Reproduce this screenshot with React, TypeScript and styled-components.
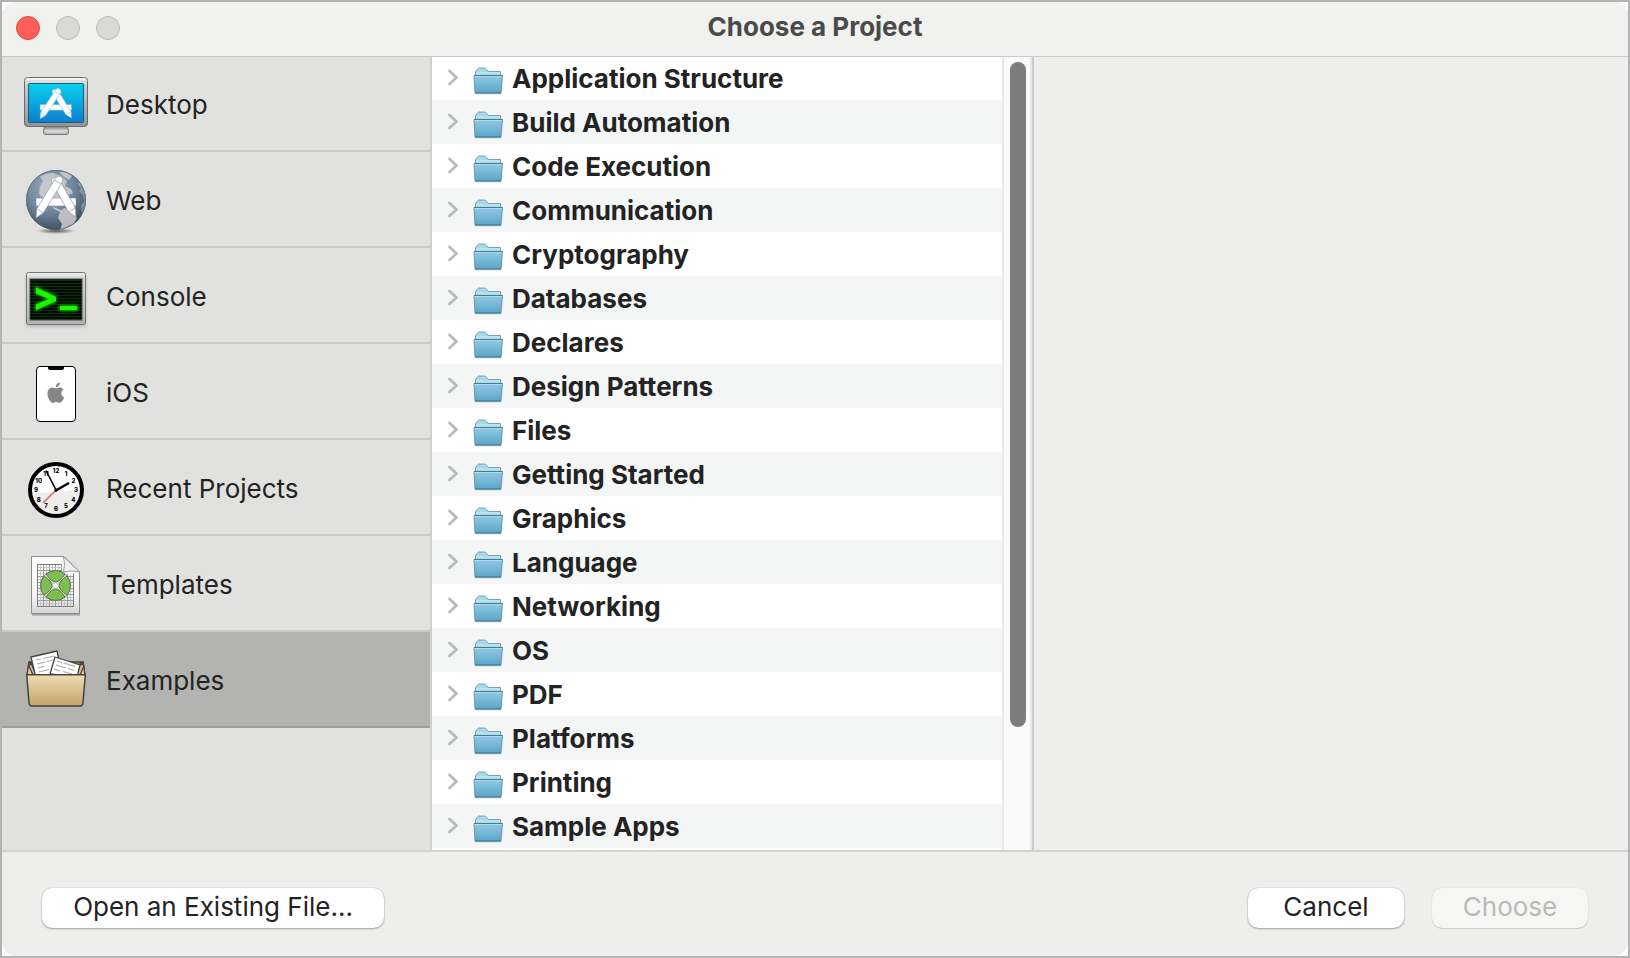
import React, { useState } from "react";
import styled, { createGlobalStyle } from "styled-components";

const GlobalStyle = createGlobalStyle`
  *, *::before, *::after { box-sizing: border-box; }
  body { margin: 0; }
  button { font: inherit; color: inherit; }
`;

const Frame = styled.div`
  height: 100vh;
  border: 2px solid #b3b3b3;
  background: #ffffff;
  font-family: Inter, "Liberation Sans", sans-serif;
  font-size: 26px;
  line-height: 32px;
  color: #232323;
`;

const Window = styled.div`
  display: flex;
  flex-direction: column;
  height: 100%;
  border-radius: 14px;
  overflow: hidden;
  background: #eeeeec;
`;

const TitleBar = styled.header`
  position: relative;
  z-index: 1;
  display: grid;
  grid-template-columns: 1fr auto 1fr;
  align-items: center;
  flex: none;
  height: 54px;
  padding: 0 14px 2px;
  background: #f1f1ef;
  box-shadow: 0 1px 0 #c9c9c8;
`;

const Lights = styled.div`
  display: flex;
  gap: 16px;
`;

const Light = styled.button<{ $fill: string; $edge: string }>`
  width: 24px;
  height: 24px;
  padding: 0;
  border: 1px solid ${(p) => p.$edge};
  border-radius: 50%;
  background: ${(p) => p.$fill};
`;

const Title = styled.h1`
  margin: 0;
  padding-bottom: 2px;
  font-size: 26px;
  line-height: 32px;
  font-weight: 700;
  color: #4a4a4a;
`;

const Body = styled.main`
  display: grid;
  grid-template-columns: 430px minmax(0, 602px) minmax(0, 1fr);
  flex: 1;
  min-height: 0;
`;

const Sidebar = styled.nav`
  min-height: 0;
  overflow: hidden;
  border-right: 2px solid #cfcfcd;
  background: #e1e1df;
`;

const Category = styled.button<{ $active: boolean }>`
  display: flex;
  align-items: center;
  gap: 18px;
  width: 100%;
  height: 96px;
  padding: 2px 22px 0;
  border: 0;
  border-bottom: 2px solid ${(p) => (p.$active ? "#9f9f9d" : "#c9c9c7")};
  background: ${(p) => (p.$active ? "#b3b3b1" : "transparent")};
  text-align: left;

  svg { flex: none; }
`;

const CategoryName = styled.span`
  padding-top: 2px;
`;

const ListPane = styled.section`
  display: flex;
  min-height: 0;
  border-right: 2px solid #cdcdcb;
  background: #ffffff;
`;

const Tree = styled.ul`
  flex: 1;
  min-width: 0;
  margin: 0;
  padding: 0;
  list-style: none;
  overflow-y: auto;
  scrollbar-width: none;
`;

const TreeItem = styled.li`
  &:nth-child(even) { background: #f4f5f5; }
`;

const TreeRow = styled.button`
  display: flex;
  align-items: center;
  width: 100%;
  height: 44px;
  padding: 0 16px;
  border: 0;
  background: transparent;
  font-weight: 700;
  text-align: left;
  white-space: nowrap;

  svg { flex: none; }
`;

const FolderSlot = styled.span`
  display: flex;
  padding: 6px 9px 0 15px;
`;

const FolderName = styled.span`
  padding-top: 2px;
`;

const Track = styled.div`
  flex: none;
  width: 30px;
  padding: 6px;
  border: solid #e8e8e8;
  border-width: 0 2px;
  background: #fafafa;
`;

const Thumb = styled.div`
  width: 16px;
  height: 85%;
  border-radius: 8px;
  background: #7d7d7d;
`;

const Details = styled.section`
  background: #eeeeec;
`;

const Footer = styled.footer`
  display: flex;
  gap: 28px;
  flex: none;
  height: 106px;
  padding: 36px 40px 0;
  border-top: 2px solid #d3d3d1;
`;

const PushButton = styled.button<{ $width: number }>`
  width: ${(p) => p.$width}px;
  height: 40px;
  padding: 0 0 2px;
  border: 0;
  border-radius: 10px;
  background: #ffffff;
  box-shadow: 0 0 1px rgba(0, 0, 0, 0.35), 0 1px 2px rgba(0, 0, 0, 0.3);
  white-space: nowrap;

  &:disabled {
    background: #f6f6f5;
    color: #b9b9b8;
    box-shadow: 0 0 1px rgba(0, 0, 0, 0.2), 0 1px 1px rgba(0, 0, 0, 0.12);
  }
`;

const Spacer = styled.div`
  flex: 1;
`;

const Icon = ({ children }: { children: React.ReactNode }) => (
  <svg width="64" height="64" viewBox="0 0 64 64" fill="none" overflow="visible" aria-hidden="true">
    {children}
  </svg>
);

/* A pencil, a brush and a ruler crossed into the letter shape of the app badge. */
const Tools = ({ edge }: { edge: string }) => (
  <g stroke={edge} strokeWidth="0.6" strokeLinejoin="round" fill="#fff">
    <path d="M12 30H52V38H12Z" />
    <path d="M27.500 14Q26.500 10 29 10Q32 8 34.500 10L51.500 40L52 49L44.500 44Z" />
    <path d="M44.500 44L51.500 40" />
    <path d="M31.600 10Q34 6.500 37.500 9Q39.500 11 38.400 14L19.400 45L12 50L12.600 41Z" />
    <path d="M12.600 41L19.400 45M30.500 12L37 16" />
  </g>
);

const DesktopIcon = () => (
  <Icon>
    <defs>
      <linearGradient id="bezel" x1="0" y1="0" x2="0" y2="1">
        <stop offset="0" stopColor="#efefef" />
        <stop offset="0.15" stopColor="#cfcfcf" />
        <stop offset="1" stopColor="#939393" />
      </linearGradient>
      <linearGradient id="screen" x1="0" y1="0" x2="0" y2="1">
        <stop offset="0" stopColor="#0ad0ee" />
        <stop offset="1" stopColor="#0a7fd0" />
      </linearGradient>
      <linearGradient id="stand" x1="0" y1="0" x2="0" y2="1">
        <stop offset="0" stopColor="#777" />
        <stop offset="0.6" stopColor="#ddd" />
        <stop offset="1" stopColor="#aaa" />
      </linearGradient>
    </defs>
    <path d="M20.500 54H43.500L44.500 60Q44.500 62.500 42 62.500H22Q19.500 62.500 19.500 60Z" fill="url(#stand)" stroke="#777" />
    <rect x="0.500" y="5.500" width="63" height="49" rx="3" fill="url(#bezel)" stroke="#6d6d6d" />
    <path d="M3 7H61" stroke="#fff" />
    <rect x="4.500" y="11.500" width="55" height="39" rx="1" fill="url(#screen)" stroke="#17617f" />
    <g transform="translate(6.500 10.500) scale(0.790 0.730)">
      <Tools edge="#5b9fc4" />
    </g>
  </Icon>
);

const WebIcon = () => (
  <Icon>
    <defs>
      <radialGradient id="ocean" cx="0.4" cy="0.3" r="0.75">
        <stop offset="0" stopColor="#9fb2c6" />
        <stop offset="0.55" stopColor="#6f8499" />
        <stop offset="1" stopColor="#38495b" />
      </radialGradient>
      <radialGradient id="ground">
        <stop offset="0" stopColor="#333" stopOpacity="0.8" />
        <stop offset="1" stopColor="#333" stopOpacity="0" />
      </radialGradient>
      <clipPath id="globe"><circle cx="32" cy="32" r="30" /></clipPath>
    </defs>
    <ellipse cx="32" cy="63" rx="20" ry="3" fill="url(#ground)" />
    <circle cx="32" cy="32" r="30" fill="url(#ocean)" />
    <g clipPath="url(#globe)" fill="#cdcecf" opacity="0.85">
      <path d="M16 9Q21 5 29 5L37 8L43 13L41 18L47 21L49 25L42 28L38 34L33 35L33 39L28 37L21 32L15 26L16 19L19 13Z" />
      <path d="M35 4Q43 3 48 8L45 12L40 9Z" />
      <path d="M28 38L34 41L40 43L36 44L30 41Z" />
      <path d="M36 44L40 40L46 42L50 47L53 50L49 57L43 60L38 63L36 62L38 56L34 50Z" />
      <path d="M53 15L57 20L55 23L59 27L60 33L57 38L58 46L66 48V12Z" opacity="0.5" />
    </g>
    <circle cx="32" cy="32" r="29.500" stroke="#4f6072" opacity="0.7" />
    <Tools edge="#7b8794" />
  </Icon>
);

const ConsoleIcon = () => (
  <Icon>
    <defs>
      <linearGradient id="case" x1="0" y1="0" x2="0" y2="1">
        <stop offset="0" stopColor="#f1f1f1" />
        <stop offset="0.12" stopColor="#d1d1d1" />
        <stop offset="1" stopColor="#b3b3b3" />
      </linearGradient>
      <pattern id="scan" width="4" height="3" patternUnits="userSpaceOnUse">
        <path d="M0 1.500H4" stroke="#0b3a0d" strokeWidth="0.8" />
      </pattern>
      <filter id="glow" x="-30%" y="-50%" width="160%" height="200%">
        <feGaussianBlur stdDeviation="1.800" />
      </filter>
    </defs>
    <rect x="2" y="10" width="60" height="53" rx="3" fill="#777" opacity="0.35" filter="url(#glow)" />
    <rect x="2.500" y="8.500" width="59" height="52" rx="2" fill="url(#case)" stroke="#777" />
    <rect x="6" y="15" width="52" height="41" fill="#020a02" />
    <rect x="6" y="15" width="52" height="41" fill="url(#scan)" stroke="#444" />
    <g filter="url(#glow)" fill="#12c800">
      <path d="M11 22L32 32V38L11 47V40L24 35L11 30Z" />
      <path d="M35 41H54V47H35Z" />
    </g>
    <path d="M12 23.500L32 33V37L12 46V40.500L25 35L12 29.500Z" fill="#1bf500" />
    <path d="M36 42H53V46H36Z" fill="#1bf500" />
  </Icon>
);

const PhoneIcon = () => (
  <Icon>
    <rect x="12.500" y="6.500" width="39" height="55" rx="3.500" fill="#fff" stroke="#000" />
    <path d="M24 6H40V8Q40 10 38 10H26Q24 10 24 8Z" fill="#000" />
    <path
      transform="translate(21.600 22.500) scale(0.850)"
      fill="#868686"
      d="M12.152 6.896c-.948 0-2.415-1.078-3.960-1.040-2.040.027-3.910 1.183-4.961 3.014-2.117 3.675-.546 9.103 1.519 12.090 1.013 1.454 2.208 3.090 3.792 3.039 1.520-.065 2.090-.987 3.935-.987 1.831 0 2.350.987 3.960.948 1.637-.026 2.676-1.480 3.676-2.948 1.156-1.688 1.636-3.325 1.662-3.415-.039-.013-3.182-1.221-3.220-4.857-.026-3.040 2.480-4.494 2.597-4.559-1.429-2.090-3.623-2.324-4.390-2.376-2-.156-3.675 1.090-4.610 1.090zM15.530 3.830c.843-1.012 1.400-2.427 1.245-3.830-1.207.052-2.662.805-3.532 1.818-.780.896-1.454 2.338-1.273 3.714 1.338.104 2.715-.688 3.559-1.701"
    />
  </Icon>
);

const hours = Array.from({ length: 12 }, (_, i) => i + 1);

const ClockIcon = () => (
  <Icon>
    <circle cx="32" cy="34" r="26" fill="#fff" />
    <path d="M8 36Q32 38 56 33A24 24 0 0 1 8 36Z" fill="#efedec" />
    <circle cx="32" cy="34" r="26" stroke="#000" strokeWidth="4" />
    {hours.map((h) => {
      const a = (h * Math.PI) / 6;
      return (
        <text
          key={h}
          x={32 + 20 * Math.sin(a)}
          y={36 - 19 * Math.cos(a)}
          fontSize="6"
          fontWeight="800"
          textAnchor="middle"
          fill="#000"
        >
          {h}
        </text>
      );
    })}
    <path d="M33 33L19 47" stroke="#dd6a52" strokeWidth="1.600" />
    <path d="M32.500 35L22 14.500" stroke="#000" strokeWidth="1.600" />
    <path d="M31 35L45 27" stroke="#000" strokeWidth="2.400" />
    <circle cx="32" cy="34" r="1.500" fill="#000" />
  </Icon>
);

const TemplateIcon = () => (
  <Icon>
    <defs>
      <linearGradient id="sheet" x1="0" y1="0" x2="0" y2="1">
        <stop offset="0" stopColor="#fff" />
        <stop offset="0.7" stopColor="#f4f4f4" />
        <stop offset="1" stopColor="#d5d5d5" />
      </linearGradient>
      <pattern id="cells" x="13" y="12" width="6" height="6" patternUnits="userSpaceOnUse">
        <path d="M0.500 0V6M0 0.500H6" stroke="#8f8f8f" strokeWidth="0.900" />
        <path d="M3.500 0V6M0 3.500H6" stroke="#b7b7b7" strokeWidth="0.700" />
      </pattern>
    </defs>
    <path d="M8 62.500H56" stroke="#777" opacity="0.6" strokeWidth="2" />
    <path d="M7.500 4.500H40L55.500 20V61.500H7.500Z" fill="url(#sheet)" stroke="#8d8d8d" />
    <path d="M13 12H38V20L40 22H50V55H13Z" fill="url(#cells)" />
    <path d="M13.500 12.500H38M13.500 12V54.500H49.500V21" stroke="#777" strokeWidth="0.800" />
    <circle cx="31.500" cy="33.500" r="15" fill="#e4e4e2" stroke="#8a8a8a" strokeWidth="0.800" />
    <g fill="#81bd55" stroke="#48652f" strokeWidth="0.800">
      {[0, 90, 180, 270].map((turn) => (
        <path key={turn} transform={`rotate(${turn} 31.500 33.500)`} d="M22 22A15 15 0 0 1 41 22Q36 30 31.500 30Q27 30 22 22Z" />
      ))}
    </g>
    <circle cx="31.500" cy="33.500" r="3" fill="#f3f3f3" stroke="#999" strokeWidth="0.600" />
    <path d="M39.500 4.500Q41.500 12 39.500 20Q48 18 55.500 20Z" fill="#f1f1f1" stroke="#8d8d8d" strokeWidth="0.900" />
  </Icon>
);

const BoxIcon = () => (
  <Icon>
    <defs>
      <linearGradient id="crate" x1="0" y1="0" x2="0" y2="1">
        <stop offset="0" stopColor="#efddb4" />
        <stop offset="1" stopColor="#c2a36a" />
      </linearGradient>
    </defs>
    <g stroke="#444" strokeWidth="1.300" strokeLinejoin="round">
      <path d="M5 14H59L61 27H3Z" fill="#8e7a52" />
      <path d="M5 14L3 27H9L7 16Z" fill="#e5cf9c" />
      <path d="M7 15L12 27H9L5 18Z" fill="#d9c08a" />
      <path d="M59 14L61 27H55L57 16Z" fill="#e5cf9c" />
      <path d="M57 15L52 27H56L60 18Z" fill="#d9c08a" />
      <path d="M7 9L33 3L38 26L12 30Z" fill="#fff" />
    </g>
    <g stroke="#aaa" strokeWidth="1.200">
      <path d="M12 12L17 11M19 10.500L30 8M13 16L21 14M23 13.500L29 12M14 20L20 18.500M15 24L25 21.500" />
    </g>
    <path d="M31 9L56 17L53 29L26 26Z" fill="#fff" stroke="#444" strokeWidth="1.300" strokeLinejoin="round" />
    <g stroke="#aaa" strokeWidth="1.200">
      <path d="M33 13L38 14.500M40 15L51 18.500M32 17L42 20M44 20.500L50 22.500M30 21L36 23M39 23.500L48 26" />
    </g>
    <path d="M2.700 26.700H61.300L59 55Q58.800 58 56 58H8Q5.200 58 5 55Z" fill="url(#crate)" stroke="#444" strokeWidth="1.500" strokeLinejoin="round" />
  </Icon>
);

const Chevron = () => (
  <svg width="10" height="18" viewBox="0 0 10 18" fill="none" aria-hidden="true">
    <path d="M1.500 2L8.500 8.500L1.500 15" stroke="#b9b9b9" strokeWidth="2.700" strokeLinecap="round" strokeLinejoin="round" />
  </svg>
);

const FolderIcon = () => (
  <svg width="30" height="28" viewBox="0 0 30 28" fill="none" aria-hidden="true">
    <defs>
      <linearGradient id="front" x1="0" y1="0" x2="0" y2="1">
        <stop offset="0" stopColor="#92cbe4" />
        <stop offset="1" stopColor="#5ba6c8" />
      </linearGradient>
    </defs>
    <path d="M2 27H28" stroke="#000" opacity="0.15" />
    <path d="M2.500 10V4.500L5 1.500Q5.500 1 6.500 1H11.500L15.500 4.500H27.500V10Z" fill="#a5d9ec" stroke="#6b97a8" strokeWidth="0.900" />
    <path d="M3 6H27" stroke="#cdebf5" />
    <path d="M1 8.500H29.500L28 26H2Z" fill="url(#front)" stroke="#4b8ba6" strokeWidth="0.800" />
    <path d="M1 8.500H29.500" stroke="#4e7888" />
    <path d="M1.500 9.500H29" stroke="#b9e0ef" strokeWidth="0.800" />
    <path d="M2 26H28" stroke="#3f758d" />
  </svg>
);

const categories = [
  { name: "Desktop", Art: DesktopIcon },
  { name: "Web", Art: WebIcon },
  { name: "Console", Art: ConsoleIcon },
  { name: "iOS", Art: PhoneIcon },
  { name: "Recent Projects", Art: ClockIcon },
  { name: "Templates", Art: TemplateIcon },
  { name: "Examples", Art: BoxIcon },
];

const folders = [
  "Application Structure",
  "Build Automation",
  "Code Execution",
  "Communication",
  "Cryptography",
  "Databases",
  "Declares",
  "Design Patterns",
  "Files",
  "Getting Started",
  "Graphics",
  "Language",
  "Networking",
  "OS",
  "PDF",
  "Platforms",
  "Printing",
  "Sample Apps",
];

export default function App() {
  const [active, setActive] = useState("Examples");

  return (
    <>
      <GlobalStyle />
      <Frame>
        <Window>
          <TitleBar>
            <Lights>
              <Light $fill="#ff5f57" $edge="#e0463f" aria-label="Close" />
              <Light $fill="#d8d8d6" $edge="#b9b9b7" aria-label="Minimize" />
              <Light $fill="#d8d8d6" $edge="#b9b9b7" aria-label="Zoom" />
            </Lights>
            <Title>Choose a Project</Title>
          </TitleBar>
          <Body>
            <Sidebar aria-label="Project types">
              {categories.map(({ name, Art }) => (
                <Category key={name} $active={name === active} aria-pressed={name === active} onClick={() => setActive(name)}>
                  <Art />
                  <CategoryName>{name}</CategoryName>
                </Category>
              ))}
            </Sidebar>
            <ListPane aria-label="Examples">
              <Tree>
                {folders.map((name) => (
                  <TreeItem key={name}>
                    <TreeRow aria-expanded={false}>
                      <Chevron />
                      <FolderSlot>
                        <FolderIcon />
                      </FolderSlot>
                      <FolderName>{name}</FolderName>
                    </TreeRow>
                  </TreeItem>
                ))}
              </Tree>
              <Track>
                <Thumb />
              </Track>
            </ListPane>
            <Details aria-label="Project details" />
          </Body>
          <Footer>
            <PushButton $width={342}>Open an Existing File...</PushButton>
            <Spacer />
            <PushButton $width={156}>Cancel</PushButton>
            <PushButton $width={156} disabled>Choose</PushButton>
          </Footer>
        </Window>
      </Frame>
    </>
  );
}
